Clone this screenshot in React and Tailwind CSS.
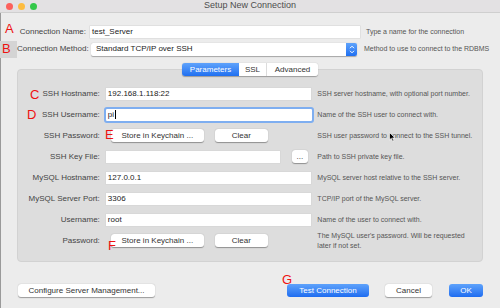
import React from 'react';

const font = { fontFamily: '"Liberation Sans", Arial, sans-serif' };

function Field({ width = 'w-[205px]', value = '', focused = false }) {
  return (
    <div
      className={`${width} h-[12px] bg-white flex items-center pl-[2px] text-[8px] text-[#222] ${
        focused ? 'outline outline-[2px] outline-[#7eaef0] rounded-[1px]' : 'shadow-[0_0_0_0.5px_#d4d4d4]'
      }`}
    >
      {value}
      {focused && <span className="w-px h-[9px] bg-black ml-px" />}
    </div>
  );
}

function Btn({ children, className = '' }) {
  return (
    <div
      className={`h-[13px] bg-white rounded-[3px] shadow-[0_0.5px_1px_rgba(0,0,0,0.35)] flex items-center justify-center text-[8px] text-[#333] ${className}`}
    >
      {children}
    </div>
  );
}

function Row({ label, hint, children }) {
  return (
    <div className="h-[21px] flex items-center">
      <div className="w-[82px] text-right text-[8px] text-[#444]">{label}</div>
      <div className="w-[213px] pl-[6px] flex items-center">{children}</div>
      <div className="pl-[5px] text-[7px] text-[#555] leading-[10px] w-[170px]">{hint}</div>
    </div>
  );
}

function Keychain() {
  return (
    <div className="flex items-center gap-[11px] pl-[5px]">
      <Btn className="w-[93px]">Store in Keychain ...</Btn>
      <Btn className="w-[53px]">Clear</Btn>
    </div>
  );
}

function Letter({ children, className }) {
  return <div className={`absolute text-[13px] leading-none text-[#ee1111] ${className}`}>{children}</div>;
}

export default function App() {
  return (
    <div style={font} className="w-[500px] h-[308px] bg-[#ececec] flex flex-col overflow-hidden relative">
      {/* title bar */}
      <div className="h-[13px] bg-[#e3e1e3] border-b border-[#cfcfcf] relative flex items-center pl-[6px] gap-[5px]">
        <span className="w-[7px] h-[7px] rounded-full bg-[#fc605c]" />
        <span className="w-[7px] h-[7px] rounded-full bg-[#fdbc40]" />
        <span className="w-[7px] h-[7px] rounded-full bg-[#34c84a]" />
        <div className="absolute inset-0 flex items-center justify-center text-[9px] text-[#4d4d4d]">Setup New Connection</div>
      </div>

      <div className="flex-1 flex flex-col border-l border-[#9a9a9a] relative">
        {/* top rows */}
        <div className="mt-[12px] h-[14px] flex items-center">
          <div className="w-[85px] text-right text-[8px] text-[#444]">Connection Name:</div>
          <div className="pl-[4px]">
            <Field width="w-[270px]" value="test_Server" />
          </div>
          <div className="pl-[6px] text-[7px] text-[#555]">Type a name for the connection</div>
        </div>
        <div className="mt-[3px] h-[14px] flex items-center">
          <div className="w-[17px] h-[17px] bg-[#d4d4d4] -ml-px" />
          <div className="w-[69px] text-right text-[8px] text-[#444] whitespace-nowrap">Connection Method:</div>
          <div className="pl-[5px]">
            <div className="w-[266px] h-[13px] bg-white rounded-[2px] shadow-[0_0.5px_1px_rgba(0,0,0,0.3)] flex items-center justify-between pl-[5px] text-[8px] text-[#222]">
              Standard TCP/IP over SSH
              <div className="w-[11px] h-[13px] rounded-r-[2px] bg-gradient-to-b from-[#5fa3fb] to-[#1e6ff1] flex items-center justify-center">
                <svg width="6" height="9" viewBox="0 0 6 9" fill="none" stroke="white" strokeWidth="1">
                  <path d="M1 3.2 L3 1.2 L5 3.2" />
                  <path d="M1 5.8 L3 7.8 L5 5.8" />
                </svg>
              </div>
            </div>
          </div>
          <div className="pl-[7px] text-[7px] text-[#555]">Method to use to connect to the RDBMS</div>
        </div>

        {/* tabs + panel */}
        <div className="mt-[7px] relative ml-[16px] w-[466px]">
          <div className="absolute top-0 left-0 right-0 flex justify-center z-10">
            <div className="flex h-[13px] rounded-[3px] shadow-[0_0.5px_1px_rgba(0,0,0,0.3)] overflow-hidden text-[8px]">
              <div className="w-[57px] bg-gradient-to-b from-[#5ea2fb] to-[#1f6ff0] text-white flex items-center justify-center">Parameters</div>
              <div className="w-[28px] bg-white text-[#333] flex items-center justify-center border-r border-[#dcdcdc]">SSL</div>
              <div className="w-[51px] bg-white text-[#333] flex items-center justify-center">Advanced</div>
            </div>
          </div>
          <div className="mt-[6px] bg-[#dddddd] rounded-[4px] border border-[#d2d2d2] pt-[13px] pb-[10px] flex flex-col">
            <Row label="SSH Hostname:" hint="SSH server hostname, with  optional port number.">
              <Field value="192.168.1.118:22" />
            </Row>
            <Row label="SSH Username:" hint="Name of the SSH user to connect with.">
              <Field width="w-[206px]" value="pi" focused />
            </Row>
            <Row label="SSH Password:" hint="SSH user password to connect to the SSH tunnel.">
              <Keychain />
            </Row>
            <Row label="SSH Key File:" hint="Path to SSH private key file.">
              <div className="flex items-center gap-[12px]">
                <Field width="w-[174px]" />
                <Btn className="w-[16px] h-[12px] text-[6px]">...</Btn>
              </div>
            </Row>
            <Row label="MySQL Hostname:" hint="MySQL server host relative to the SSH server.">
              <Field value="127.0.0.1" />
            </Row>
            <Row label="MySQL Server Port:" hint="TCP/IP port of the MySQL server.">
              <Field value="3306" />
            </Row>
            <Row label="Username:" hint="Name of the user to connect with.">
              <Field value="root" />
            </Row>
            <Row label="Password:" hint={<>The MySQL user's password. Will be requested<br />later if not set.</>}>
              <Keychain />
            </Row>
          </div>
        </div>

        {/* bottom buttons */}
        <div className="mt-[22px] flex items-center pl-[17px]">
          <Btn className="w-[137px]">Configure Server Management...</Btn>
          <div className="w-[132px]" />
          <div className="w-[82px] h-[13px] rounded-[3px] bg-gradient-to-b from-[#5ea2fb] to-[#1e6cf0] text-white text-[8px] flex items-center justify-center">Test Connection</div>
          <Btn className="w-[47px] ml-[16px]">Cancel</Btn>
          <div className="w-[34px] ml-[17px] h-[13px] rounded-[3px] bg-gradient-to-b from-[#5ea2fb] to-[#1e6cf0] text-white text-[8px] flex items-center justify-center">OK</div>
        </div>

        {/* annotation letters */}
        <Letter className="left-[4px] top-[9px]">A</Letter>
        <Letter className="left-[1px] top-[29px]">B</Letter>
        <Letter className="left-[29px] top-[75px]">C</Letter>
        <Letter className="left-[26px] top-[95px]">D</Letter>
        <Letter className="left-[104px] top-[115px]">E</Letter>
        <Letter className="left-[107px] top-[226px]">F</Letter>
        <Letter className="left-[281px] top-[260px]">G</Letter>

        {/* mouse pointer */}
        <svg className="absolute left-[388px] top-[119px]" width="7" height="10" viewBox="0 0 7 10">
          <path d="M0.5 0.5 L0.5 8 L2.3 6.3 L3.6 9.3 L4.8 8.8 L3.6 5.9 L6 5.9 Z" fill="black" stroke="white" strokeWidth="0.7" />
        </svg>
      </div>
    </div>
  );
}
